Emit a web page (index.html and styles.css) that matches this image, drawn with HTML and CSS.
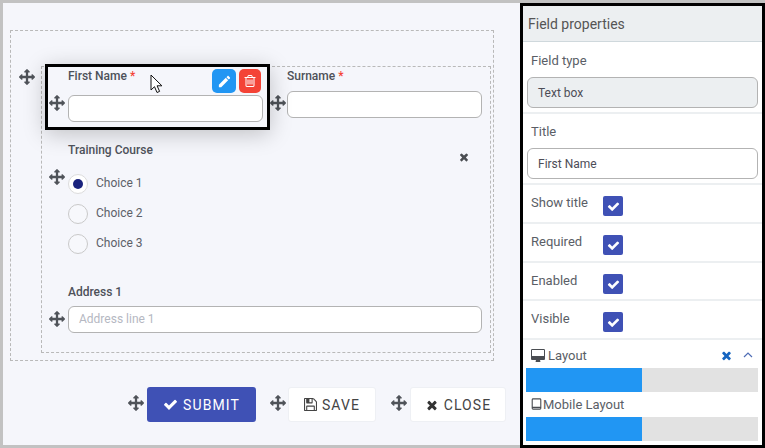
FILE: index.html
```html
<!DOCTYPE html>
<html>
<head>
<meta charset="UTF-8">
    <title>Form designer</title>
    <link rel="stylesheet" href="styles.css">
</head>
<body>
<svg class="sprites" width="0" height="0">
    <symbol id="i-move" viewBox="0 0 1792 1792"><path d="M1792 896q0 26-19 45l-256 256q-19 19-45 19t-45-19-19-45v-128h-384v384h128q26 0 45 19t19 45-19 45l-256 256q-19 19-45 19t-45-19l-256-256q-19-19-19-45t19-45 45-19h128v-384h-384v128q0 26-19 45t-45 19-45-19l-256-256q-19-19-19-45t19-45l256-256q19-19 45-19t45 19 19 45v128h384v-384h-128q-26 0-45-19t-19-45 19-45l256-256q19-19 45-19t45 19l256 256q19 19 19 45t-19 45-45 19h-128v384h384v-128q0-26 19-45t45-19 45 19l256 256q19 19 19 45z"/></symbol>
    <symbol id="i-check" viewBox="0 0 1792 1792"><path d="M1671 566q0 40-28 68l-724 724-136 136q-28 28-68 28t-68-28l-136-136-362-362q-28-28-28-68t28-68l136-136q28-28 68-28t68 28l294 295 656-657q28-28 68-28t68 28l136 136q28 28 28 68z"/></symbol>
    <symbol id="i-times" viewBox="0 0 1792 1792"><path d="M1490 1322q0 40-28 68l-136 136q-28 28-68 28t-68-28l-294-294-294 294q-28 28-68 28t-68-28l-136-136q-28-28-28-68t28-68l294-294-294-294q-28-28-28-68t28-68l136-136q28-28 68-28t68 28l294 294 294-294q28-28 68-28t68 28l136 136q28 28 28 68t-28 68l-294 294 294 294q28 28 28 68z"/></symbol>
</svg>

<div class="app">
    <div class="stage">
        <div class="outer-zone">
            <div class="inner-zone">
                <svg class="move move-row"><use href="#i-move"/></svg>
                <div class="top-row">
                    <div class="field-selected">
                        <label class="field-label">First Name <span class="req">*</span></label>
                        <div class="input-row">
                            <svg class="move"><use href="#i-move"/></svg>
                            <div class="text-input"></div>
                        </div>
                        <div class="field-tools">
                            <button class="tool tool-edit">
                                <svg viewBox="0 0 24 24" width="15" height="15"><path d="M20.71,7.04C21.1,6.65 21.1,6 20.71,5.63L18.37,3.29C18,2.9 17.35,2.9 16.96,3.29L15.12,5.12L18.87,8.87M3,17.25V21H6.75L17.81,9.93L14.06,6.18L3,17.25Z"/></svg>
                            </button>
                            <button class="tool tool-delete">
                                <svg viewBox="0 0 1792 1792" width="14" height="14"><path d="M704 736v576q0 14-9 23t-23 9h-64q-14 0-23-9t-9-23v-576q0-14 9-23t23-9h64q14 0 23 9t9 23zm256 0v576q0 14-9 23t-23 9h-64q-14 0-23-9t-9-23v-576q0-14 9-23t23-9h64q14 0 23 9t9 23zm256 0v576q0 14-9 23t-23 9h-64q-14 0-23-9t-9-23v-576q0-14 9-23t23-9h64q14 0 23 9t9 23zm128 724v-948h-896v948q0 22 7 40.500t14.500 27 10.500 8.500h832q3 0 10.500-8.500t14.500-27 7-40.500zm-672-1076h448l-48-117q-7-9-17-11h-317q-10 2-17 11zm928 32v64q0 14-9 23t-23 9h-96v948q0 83-47 143.500t-113 60.500h-832q-66 0-113-58.500t-47-141.500v-952h-96q-14 0-23-9t-9-23v-64q0-14 9-23t23-9h309l70-167q15-37 54-63t79-26h320q40 0 79 26t54 63l70 167h309q14 0 23 9t9 23z"/></svg>
                            </button>
                        </div>
                        <svg class="cursor" viewBox="0 0 14 20" width="14" height="20"><path d="M1 1v15l3.500-3.300 2.500 5.800 2.600-1.100-2.500-5.600h4.800z"/></svg>
                    </div>
                    <div class="field-plain">
                        <label class="field-label">Surname <span class="req">*</span></label>
                        <div class="input-row">
                            <svg class="move"><use href="#i-move"/></svg>
                            <div class="text-input"></div>
                        </div>
                    </div>
                </div>

                <div class="choice-field">
                    <label class="field-label">Training Course</label>
                    <svg class="move move-choice"><use href="#i-move"/></svg>
                    <svg class="remove-field"><use href="#i-times"/></svg>
                    <div class="choices">
                        <div class="choice"><span class="radio radio-on"></span>Choice 1</div>
                        <div class="choice"><span class="radio"></span>Choice 2</div>
                        <div class="choice"><span class="radio"></span>Choice 3</div>
                    </div>
                </div>

                <div class="address-field">
                    <label class="field-label">Address 1</label>
                    <div class="input-row">
                        <svg class="move"><use href="#i-move"/></svg>
                        <div class="text-input wide placeholder">Address line 1</div>
                    </div>
                </div>
            </div>
        </div>

        <div class="actions">
            <svg class="move"><use href="#i-move"/></svg>
            <button class="btn btn-submit"><svg><use href="#i-check"/></svg>SUBMIT</button>
            <svg class="move after-submit"><use href="#i-move"/></svg>
            <button class="btn btn-save">
                <svg viewBox="0 0 1536 1536"><path d="M384 1408h768v-384H384zm896 0h128V512q0-14-10-38.500t-20-34.500L1097 158q-10-10-34-20t-39-10v416q0 40-28 68t-68 28H352q-40 0-68-28t-28-68V128H128v1280h128V992q0-40 28-68t68-28h832q40 0 68 28t28 68zM896 480V160q0-13-9.500-22.500T864 128H672q-13 0-22.500 9.500T640 160v320q0 13 9.500 22.500T672 512h192q13 0 22.500-9.500T896 480zm640 32v928q0 40-28 68t-68 28H96q-40 0-68-28t-28-68V96q0-40 28-68T96 0h928q40 0 88 20t76 48l280 280q28 28 48 76t20 88z"/></svg>SAVE
            </button>
            <svg class="move after-save"><use href="#i-move"/></svg>
            <button class="btn btn-close"><svg><use href="#i-times"/></svg>CLOSE</button>
        </div>
    </div>

    <div class="panel">
        <div class="panel-head">Field properties</div>

        <div class="prop prop-first">
            <div class="prop-label">Field type</div>
            <div class="prop-box prop-box-grey">Text box</div>
        </div>
        <div class="prop">
            <div class="prop-label">Title</div>
            <div class="prop-box">First Name</div>
        </div>

        <div class="check-row"><span class="prop-label">Show title</span><span class="checkbox"><svg><use href="#i-check"/></svg></span></div>
        <div class="check-row"><span class="prop-label">Required</span><span class="checkbox"><svg><use href="#i-check"/></svg></span></div>
        <div class="check-row check-row-short"><span class="prop-label">Enabled</span><span class="checkbox"><svg><use href="#i-check"/></svg></span></div>
        <div class="check-row"><span class="prop-label">Visible</span><span class="checkbox"><svg><use href="#i-check"/></svg></span></div>

        <div class="layout">
            <div class="layout-head">
                <svg class="ico-desktop" viewBox="0 0 1792 1536"><path d="M1664 800V96q0-13-9.500-22.500T1632 64H160q-13 0-22.500 9.500T128 96v704q0 13 9.500 22.500T160 832h1472q13 0 22.500-9.500t9.500-22.500zm128-704v1088q0 66-47 113t-113 47h-480q0 37 16 77.500t32 71 16 43.500q0 26-19 45t-45 19H640q-26 0-45-19t-19-45q0-14 16-44t32-70 16-78H160q-66 0-113-47T0 1184V96q0-66 47-113T160-64h1472q66 0 113 47t47 113z"/></svg>
                <span>Layout</span>
                <svg class="layout-x"><use href="#i-times"/></svg>
                <svg class="layout-up" viewBox="0 0 10 6"><path d="M1 5l4-4 4 4"/></svg>
            </div>
            <div class="bar"><div class="bar-fill" style="width: 50%"></div></div>
            <div class="layout-head layout-head-mobile">
                <svg class="ico-tablet" viewBox="0 0 12 14"><path d="M2 1h8a1 1 0 0 1 1 1v10a1 1 0 0 1-1 1H2a1 1 0 0 1-1-1V2a1 1 0 0 1 1-1zM1 11h10"/></svg>
                <span>Mobile Layout</span>
            </div>
            <div class="bar"><div class="bar-fill" style="width: 50%"></div></div>
        </div>
    </div>
</div>
</body>
</html>
```

FILE: styles.css
```css
* { box-sizing: border-box; }
html, body { margin: 0; height: 448px; overflow: hidden; }
body { font-family: Roboto, Arial, sans-serif; font-size: 12px; color: #555; background: #c2c2c2; }
button { font-family: inherit; cursor: pointer; }
.sprites { position: absolute; }

.app { display: flex; height: 448px; padding: 3px 0 0 3px; }

/* left side, the form canvas */
.stage { width: 517px; height: 442px; padding: 27px 14px 0 7px; background: #f5f6fb; }
.outer-zone { width: 484px; height: 331px; padding: 35px 0 0 30px; border: 1px dashed #b9b9b9; }
.inner-zone { position: relative; width: 450px; height: 287px; border: 1px dashed #b9b9b9; }

.move { display: block; width: 16px; height: 16px; flex: none; fill: #4f5359; }
.move-row { position: absolute; left: -23px; top: 2px; }

.field-label { display: block; height: 16px; line-height: 18px; font-weight: 500; color: #4d5159; }
.req { color: #f44336; }
.input-row { display: flex; align-items: center; gap: 3px; }
.text-input { width: 195px; height: 27px; background: #fff; border: 1px solid #b3b3b3; border-radius: 6px; }
.text-input.wide { width: 414px; }
.placeholder { padding-left: 10px; line-height: 25px; color: #b5b8c2; }

.top-row { display: flex; margin: -3px 0 0 3px; }
.field-selected { position: relative; width: 225px; height: 66px; padding-left: 1px; border: 3px solid #000; box-shadow: 0 4px 22px rgba(0, 0, 0, 0.22); }
.field-selected .field-label { padding-left: 19px; margin-bottom: 12px; }
.field-selected .input-row { align-items: flex-start; }
.field-plain { padding-top: 3px; }
.field-plain .field-label { padding-left: 17px; margin-bottom: 8px; }
.field-plain .input-row { gap: 1px; }
.field-plain .move { margin-top: -3px; }

.field-tools { position: absolute; right: 6px; top: 2px; display: flex; gap: 3px; }
.tool { display: flex; align-items: center; justify-content: center; width: 24px; height: 24px; padding: 0; border: none; border-radius: 5px; }
.tool svg { fill: #fff; }
.tool-edit { background: #2196f3; }
.tool-delete { width: 22px; background: #f44336; }
.cursor { position: absolute; left: 102px; top: 7px; fill: #fff; stroke: #111; stroke-width: 1; }

.choice-field { position: relative; margin: 11px 0 0 26px; }
.move-choice { position: absolute; left: -19px; top: 28px; }
.remove-field { position: absolute; left: 390px; top: 10px; width: 12px; height: 12px; fill: #4a4d52; }
.choices { display: flex; flex-direction: column; gap: 10px; margin-top: 17px; }
.choice { display: flex; align-items: flex-start; height: 20px; line-height: 18px; color: #5c6068; }
.radio { width: 20px; height: 20px; margin-right: 8px; background: #f7f8fc; border: 1px solid #c9c9c9; border-radius: 50%; }
.radio-on { background: #fff; border-color: #dcdcdc; position: relative; }
.radio-on::after { content: ""; position: absolute; left: 4px; top: 4px; width: 10px; height: 10px; border-radius: 50%; background: #1a237e; }

.address-field { margin-top: 29px; padding-left: 7px; }
.address-field .field-label { padding-left: 19px; margin-bottom: 7px; }
.address-field .move { margin-top: -1px; }

.actions { display: flex; align-items: center; justify-content: flex-end; margin-top: 26px; }
.btn { display: flex; align-items: center; justify-content: center; height: 35px; padding: 0; font-size: 14px; letter-spacing: 1.1px; border-radius: 3px; }
.actions .move { margin: -3px 3px 0 0; }
.actions .after-submit { margin: -3px 2px 0 14px; }
.actions .after-save { margin: -3px 3px 0 15px; }
.btn svg { width: 14px; height: 14px; margin-right: 5px; }
.btn-submit { width: 109px; color: #fff; background: #3f51b5; border: none; }
.btn-submit svg { width: 15px; height: 15px; fill: #fff; }
.btn-save { width: 88px; color: #444; background: #fff; border: 1px solid #eef0f4; }
.btn-save svg { width: 13px; height: 13px; fill: #444; }
.btn-close { width: 96px; color: #444; background: #fff; border: 1px solid #eef0f4; }
.btn-close svg { fill: #333; }

/* right side, properties */
.panel { width: 245px; height: 445px; background: #fff; border: 3px solid #000; }
.panel-head { height: 36px; padding-left: 5px; line-height: 37px; font-size: 14px; background: #eceff1; border-bottom: 1px solid #cfd8dc; }

.prop { padding: 9px 4px 4px; border-bottom: 2px solid #eceff1; }
.prop-first { padding-top: 10px; }
.prop-label { display: block; height: 16px; line-height: 18px; padding-left: 4px; font-size: 13px; color: #5a5e66; }
.prop-box { height: 31px; margin-top: 9px; padding-left: 10px; line-height: 31px; color: #4d4d57; background: #fff; border: 1px solid #b3b3b3; border-radius: 6px; }
.prop-box-grey { background: #eceff1; }

.check-row { display: flex; height: 39px; padding: 9px 0 0 4px; border-bottom: 2px solid #eceff1; }
.check-row-short { height: 38px; }
.check-row .prop-label { width: 76px; }
.checkbox { display: flex; align-items: center; justify-content: center; width: 20px; height: 20px; margin-top: 2px; background: #3f51b5; border-radius: 2px; }
.checkbox svg { width: 13px; height: 13px; fill: #fff; }

.layout { padding: 7px 4px 0 3px; }
.layout-head { display: flex; align-items: center; height: 16px; padding-left: 5px; font-size: 13px; color: #5a5e66; }
.layout-head-mobile { margin: 4px 0 5px; }
.ico-desktop { width: 14px; height: 13px; margin-right: 3px; fill: #4a4d52; overflow: visible; }
.ico-tablet { width: 11px; height: 12px; margin-right: 1px; fill: none; stroke: #4a4d52; stroke-width: 1.3; }
.layout-x { width: 13px; height: 13px; margin-left: 133px; fill: #1565c0; }
.layout-up { width: 10px; height: 6px; margin-left: 10px; fill: none; stroke: #4f6db5; stroke-width: 1.2; }
.layout > .layout-head:first-child { margin-bottom: 5px; }
.bar { height: 24px; background: #e2e2e2; }
.bar-fill { height: 24px; background: #2196f3; }
```
